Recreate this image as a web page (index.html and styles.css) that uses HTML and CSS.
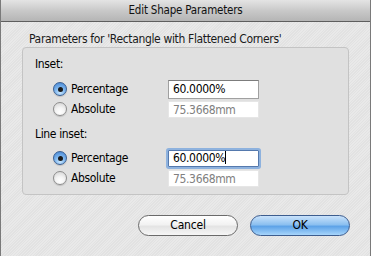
FILE: index.html
```html
<!DOCTYPE html>
<html>
<head>
<meta charset="utf-8">
<link rel="stylesheet" href="styles.css">
</head>
<body>
<div class="window">
  <div class="titlebar">Edit Shape Parameters</div>
  <div class="content">
    <div class="caption">Parameters for 'Rectangle with Flattened Corners'</div>
    <div class="group">
      <div class="group-label">Inset:</div>
      <div class="row">
        <span class="radio on"></span><span class="opt">Percentage</span>
        <span class="field">60.0000%</span>
      </div>
      <div class="row">
        <span class="radio"></span><span class="opt">Absolute</span>
        <span class="field disabled">75.3668mm</span>
      </div>
      <div class="group-label second">Line inset:</div>
      <div class="row">
        <span class="radio on"></span><span class="opt">Percentage</span>
        <span class="field focus">60.0000%<span class="caret"></span></span>
      </div>
      <div class="row">
        <span class="radio"></span><span class="opt">Absolute</span>
        <span class="field disabled">75.3668mm</span>
      </div>
    </div>
    <div class="buttons">
      <div class="btn cancel">Cancel</div>
      <div class="btn ok">OK</div>
    </div>
  </div>
</div>
</body>
</html>
```
FILE: styles.css
```css
* { box-sizing: border-box; }
html, body { margin: 0; padding: 0; }
body {
  width: 371px;
  height: 256px;
  overflow: hidden;
  font-family: "DejaVu Sans Condensed", "DejaVu Sans", sans-serif;
  font-stretch: condensed;
  font-size: 12px;
  letter-spacing: -0.35px;
  color: #000;
}
.window {
  width: 371px;
  height: 256px;
  border-left: 1px solid #7a7a7a;
  border-right: 1px solid #7a7a7a;
  background-color: #e6e6e6;
  background-image: repeating-linear-gradient(135deg, #e9e9e9 0px, #e9e9e9 1px, #e2e2e2 1px, #e2e2e2 2px);
  display: flex;
  flex-direction: column;
}
.titlebar {
  height: 22px;
  line-height: 21px;
  text-align: center;
  font-size: 11.5px;
  letter-spacing: -0.2px;
  background: linear-gradient(#e4e4e4, #c9c9c9 50%, #b5b5b5);
  border-bottom: 1px solid #5e5e5e;
  color: #111;
}
.content {
  padding: 9px 0 0 21px;
  display: flex;
  flex-direction: column;
}
.caption {
  padding-left: 7px;
  height: 16px;
  line-height: 16px;
  color: #1a1a1a;
}
.group {
  width: 327px;
  height: 148px;
  border: 1px solid #c4c4c4;
  border-radius: 4px;
  background: #e0e0e0;
  padding: 8px 0 0 12px;
  display: flex;
  flex-direction: column;
}
.group-label {
  height: 16px;
  line-height: 16px;
  margin-bottom: 7px;
}
.group-label.second { margin-top: 7px; margin-bottom: 6px; }
.row {
  height: 20px;
  display: flex;
  align-items: center;
}
.radio {
  width: 14px;
  height: 14px;
  border-radius: 50%;
  margin-left: 18px;
  border: 1px solid #8d8d8d;
  background: radial-gradient(circle at 50% 75%, #ffffff 0, #f4f4f4 40%, #cfcfcf 100%);
  box-shadow: 0 1px 1px rgba(0,0,0,0.15);
  position: relative;
}
.radio.on {
  border-color: #3a5f92;
  background: radial-gradient(circle at 50% 80%, #c8e6ff 0, #7eb6ee 45%, #3e7fcf 100%);
}
.radio.on::after {
  content: "";
  position: absolute;
  left: 3.5px;
  top: 3.5px;
  width: 5px;
  height: 5px;
  border-radius: 50%;
  background: #1a1a1a;
}
.opt {
  margin-left: 4px;
  width: 97px;
}
.field {
  width: 91px;
  height: 19px;
  line-height: 17px;
  padding-left: 4px;
  background: #fff;
  border: 1px solid #a0a0a0;
  border-top-color: #7c7c7c;
  position: relative;
}
.field.disabled {
  height: 17px;
  line-height: 16px;
  border-color: #e6e6e6;
  color: #808080;
}
.field.focus {
  height: 17px;
  line-height: 15px;
  border-color: #5579ad;
  box-shadow: 0 0 0 2px #8eb2de;
  border-radius: 1px;
}
.caret {
  display: inline-block;
  width: 1px;
  height: 13px;
  background: #000;
  vertical-align: -2px;
}
.buttons {
  display: flex;
  gap: 12px;
  margin-top: 20px;
  padding-left: 116px;
}
.btn {
  width: 100px;
  height: 21px;
  border-radius: 11px;
  text-align: center;
  line-height: 19px;
  font-size: 12px;
  letter-spacing: -0.2px;
}
.btn.cancel {
  border: 1px solid #6a6a6a;
  background: linear-gradient(#ffffff, #f2f2f2 45%, #e4e4e4 55%, #f6f6f6);
}
.btn.ok {
  border: 1px solid #3d5d8f;
  background: linear-gradient(#c9e2fb, #8cc0f0 45%, #5ea3e8 55%, #a7d5fb);
}
```
